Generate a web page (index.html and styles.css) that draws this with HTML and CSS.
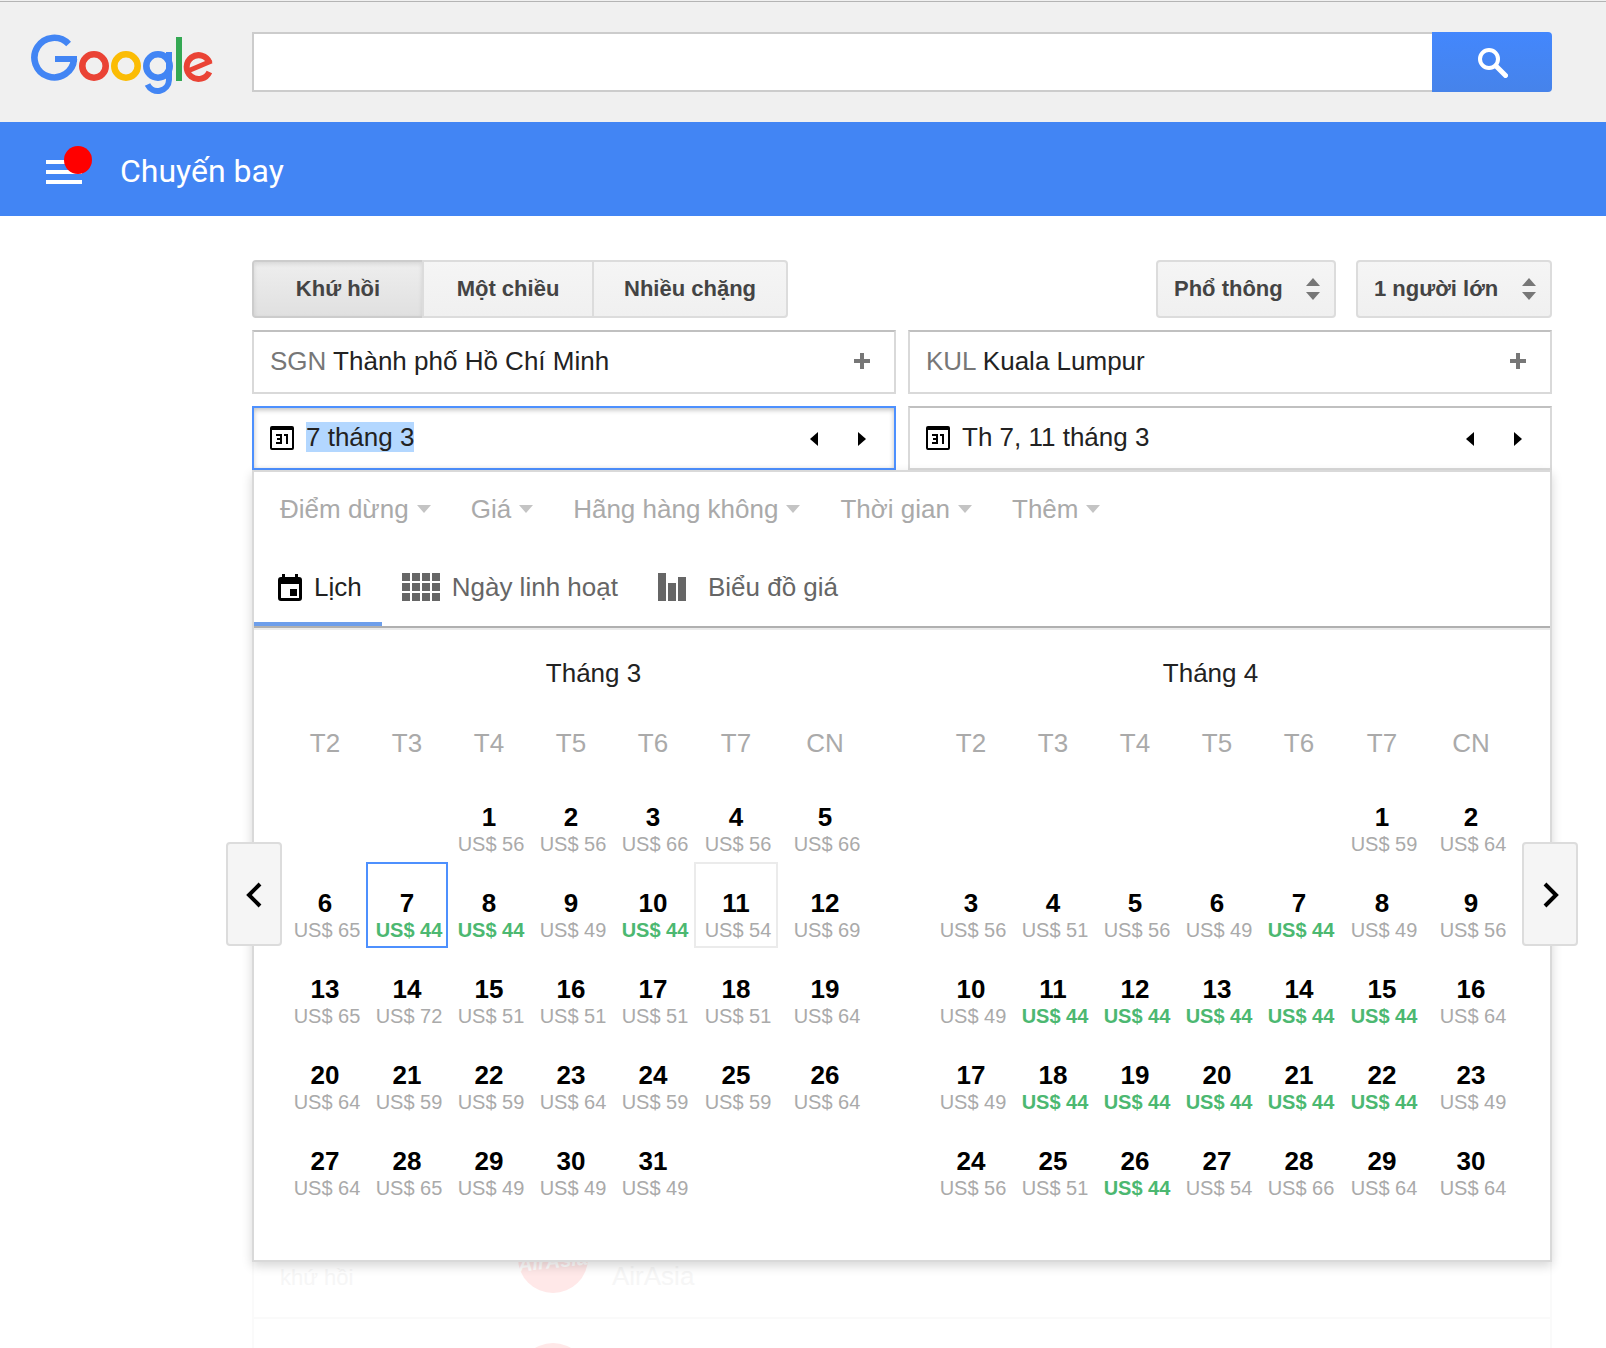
FILE: index.html
```html
<!DOCTYPE html>
<html lang="vi">
<head>
<meta charset="utf-8">
<title>Chuyến bay</title>
<meta name="viewport" content="width=device-width, initial-scale=1">
<link rel="stylesheet" href="styles.css">
</head>
<body>
<header class="search-header">
  <a class="logo" href="#" aria-label="Google">
    <svg width="184" height="62" viewBox="0 0 184 62" fill="none" stroke-width="6.6">
      <g stroke="#4285f4">
        <path d="M37.6 10A19.8 19.8 0 1 0 43 25"/>
        <path d="M24 25H46" stroke-width="6"/>
        <circle cx="127" cy="32" r="11.7"/>
        <path d="M138 18V46A11.3 11.3 0 0 1 116.5 50.5" stroke-width="6"/>
      </g>
      <circle cx="63" cy="32" r="11.7" stroke="#ea4335"/>
      <circle cx="95" cy="32" r="11.7" stroke="#fbbc05"/>
      <rect x="145" y="3" width="6" height="44" fill="#34a853"/>
      <g stroke="#ea4335" stroke-width="6">
        <path d="M178.6 28.6A11.9 11.9 0 1 0 178.4 38"/>
        <path d="M158 36.5L180.5 27" stroke-width="5"/>
      </g>
    </svg>
  </a>
  <form class="search-form" onsubmit="return false">
    <input class="search-input" type="text" aria-label="Tìm kiếm">
    <button class="search-button" type="submit" aria-label="Tìm kiếm">
      <svg width="30" height="30" viewBox="0 0 30 30" fill="none" stroke="#fff">
        <circle cx="11" cy="11" r="9" stroke-width="4"/>
        <path d="M18 18L27.5 27.5" stroke-width="5" stroke-linecap="round"/>
      </svg>
    </button>
  </form>
</header>

<nav class="app-bar">
  <button class="menu-button" type="button" aria-label="Menu">
    <svg width="36" height="24" viewBox="0 0 36 24" fill="#fff"><path d="M0 0h36v4H0zM0 10h36v4H0zM0 20h36v4H0z"/></svg>
    <span class="menu-badge"></span>
  </button>
  <h1 class="app-title">Chuyến bay</h1>
</nav>

<main class="content">
  <div class="options">
    <div class="segmented">
      <button class="segment segment-active" type="button" aria-pressed="true">Khứ hồi</button>
      <button class="segment" type="button" aria-pressed="false">Một chiều</button>
      <button class="segment" type="button" aria-pressed="false">Nhiều chặng</button>
    </div>
    <div class="selects">
      <div class="select-wrap">
        <select class="select" aria-label="Hạng ghế"><option>Phổ thông</option></select>
        <svg class="select-icon" width="14" height="22" viewBox="0 0 14 22" fill="#777"><path d="M0 8L7 0L14 8zM0 14H14L7 22z"/></svg>
      </div>
      <div class="select-wrap">
        <select class="select" aria-label="Hành khách"><option>1 người lớn</option></select>
        <svg class="select-icon" width="14" height="22" viewBox="0 0 14 22" fill="#777"><path d="M0 8L7 0L14 8zM0 14H14L7 22z"/></svg>
      </div>
    </div>
  </div>

  <div class="fields">
    <button class="field" type="button">
      <span class="field-text"><span class="code">SGN</span> Thành phố Hồ Chí Minh</span>
      <svg width="16" height="16" viewBox="0 0 16 16" fill="#777"><path d="M6 0h4v6h6v4h-6v6H6v-6H0V6h6z"/></svg>
    </button>
    <button class="field" type="button">
      <span class="field-text"><span class="code">KUL</span> Kuala Lumpur</span>
      <svg width="16" height="16" viewBox="0 0 16 16" fill="#777"><path d="M6 0h4v6h6v4h-6v6H6v-6H0V6h6z"/></svg>
    </button>
    <div class="field field-focused">
      <svg class="date-icon" width="24" height="24" viewBox="0 0 24 24" fill="none" stroke="#000" stroke-width="2"><rect x="1" y="1" width="22" height="22" rx="1"/><path d="M1 2.5H23" stroke-width="3"/><path d="M6 9h5v8H6M7 13h4M14 9h3v9"/></svg>
      <input class="date-input" id="depart" type="text" value="7 tháng 3" aria-label="Ngày đi">
      <button class="step" type="button" aria-label="Ngày trước"><svg width="8" height="14" viewBox="0 0 8 14"><path d="M8 0V14L0 7z"/></svg></button>
      <button class="step" type="button" aria-label="Ngày sau"><svg width="8" height="14" viewBox="0 0 8 14"><path d="M0 0V14L8 7z"/></svg></button>
    </div>
    <div class="field">
      <svg class="date-icon" width="24" height="24" viewBox="0 0 24 24" fill="none" stroke="#000" stroke-width="2"><rect x="1" y="1" width="22" height="22" rx="1"/><path d="M1 2.5H23" stroke-width="3"/><path d="M6 9h5v8H6M7 13h4M14 9h3v9"/></svg>
      <input class="date-input" type="text" value="Th 7, 11 tháng 3" aria-label="Ngày về">
      <button class="step" type="button" aria-label="Ngày trước"><svg width="8" height="14" viewBox="0 0 8 14"><path d="M8 0V14L0 7z"/></svg></button>
      <button class="step" type="button" aria-label="Ngày sau"><svg width="8" height="14" viewBox="0 0 8 14"><path d="M0 0V14L8 7z"/></svg></button>
    </div>
  </div>

  <section class="panel">
    <div class="filters">
      <button class="filter" type="button">Điểm dừng</button>
      <button class="filter" type="button">Giá</button>
      <button class="filter" type="button">Hãng hàng không</button>
      <button class="filter" type="button">Thời gian</button>
      <button class="filter" type="button">Thêm</button>
    </div>
    <div class="tabs" role="tablist">
      <button class="tab tab-active" type="button" role="tab" aria-selected="true">
        <svg width="24" height="28" viewBox="0 0 24 28" fill="#000"><path fill-rule="evenodd" d="M4 1h3v3h10V1h3v3h1a3 3 0 0 1 3 3v18a3 3 0 0 1-3 3H3a3 3 0 0 1-3-3V7a3 3 0 0 1 3-3h1zM3 11v14h18V11zM12 16h7v7h-7z"/></svg>
        Lịch
      </button>
      <button class="tab" type="button" role="tab" aria-selected="false">
        <svg width="38" height="28" viewBox="0 0 38 28" fill="#666"><path d="M0 0h8v8H0zM10 0h8v8h-8zM20 0h8v8h-8zM30 0h8v8h-8zM0 10h8v8H0zM10 10h8v8h-8zM20 10h8v8h-8zM30 10h8v8h-8zM0 20h8v8H0zM10 20h8v8h-8zM20 20h8v8h-8zM30 20h8v8h-8z"/></svg>
        Ngày linh hoạt
      </button>
      <button class="tab" type="button" role="tab" aria-selected="false">
        <svg width="38" height="28" viewBox="0 0 38 28" fill="#666"><path d="M0 0h8v28H0zM10 10h8v18h-8zM20 4h8v24h-8z"/></svg>
        Biểu đồ giá
      </button>
    </div>
    <div class="months" id="months"></div>
    <button class="page-button page-prev" type="button" aria-label="Tháng trước"><svg width="16" height="26" viewBox="0 0 16 26" fill="none" stroke="#000" stroke-width="4"><path d="M14 2L3 13L14 24"/></svg></button>
    <button class="page-button page-next" type="button" aria-label="Tháng sau"><svg width="16" height="26" viewBox="0 0 16 26" fill="none" stroke="#000" stroke-width="4"><path d="M2 2L13 13L2 24"/></svg></button>
  </section>

  <section class="results">
    <div class="result">
      <span class="result-trip">khứ hồi</span>
      <svg width="70" height="70" viewBox="0 0 70 70"><circle cx="35" cy="35" r="35" fill="#ffe8e8"/><text class="airline-mark" x="35" y="45" text-anchor="middle" transform="rotate(-6 35 40)">AirAsia</text></svg>
      <span class="result-airline">AirAsia</span>
    </div>
    <div class="result">
      <span class="result-trip"></span>
      <svg width="70" height="70" viewBox="0 0 70 70"><circle cx="35" cy="35" r="35" fill="#ffe8e8"/></svg>
    </div>
  </section>
</main>
<script src="calendar.js"></script>
</body>
</html>
```
FILE: styles.css
```css
* {
  box-sizing: border-box;
}

body {
  margin: 0;
  background: #fff;
  color: #222;
  font-family: "Liberation Sans", Arial, sans-serif;
  font-size: 26px;
  line-height: 30px;
}

button,
input,
select {
  margin: 0;
  padding: 0;
  border: 0;
  border-radius: 0;
  outline: 0;
  background: none;
  color: inherit;
  font: inherit;
}

svg {
  display: block;
  flex: none;
}

.search-header {
  display: flex;
  height: 122px;
  padding: 32px 54px 0 31px;
  background: #f0f0f0;
  box-shadow: inset 0 1px #f0f0f0, inset 0 2px #b4b4b4;
}

.logo {
  flex: none;
  width: 221px;
  padding-top: 2px;
}

.search-form {
  display: flex;
  flex: 1;
  height: 60px;
}

.search-input {
  flex: 1;
  min-width: 0;
  padding: 0 16px;
  border: 2px solid #ccc;
  border-right: 0;
  background: #fff;
}

.search-button {
  display: flex;
  align-items: center;
  justify-content: center;
  width: 120px;
  padding: 2px 0 0 2px;
  border-radius: 0 4px 4px 0;
  background: linear-gradient(#4387fd, #4683ea);
}

.app-bar {
  display: flex;
  align-items: center;
  gap: 38px;
  height: 94px;
  padding: 6px 46px 0;
  background: #4285f4;
  color: #fff;
}

.menu-button {
  position: relative;
}

.menu-badge {
  position: absolute;
  top: -14px;
  right: -10px;
  width: 28px;
  height: 28px;
  border-radius: 50%;
  background: #f00;
}

.app-title {
  margin: 0;
  padding-bottom: 2px;
  font-family: Roboto, sans-serif;
  font-size: 32px;
  font-weight: 400;
  line-height: 40px;
}

.content {
  padding: 44px 54px 0 252px;
}

.options {
  display: flex;
  justify-content: space-between;
  color: #444;
  font-size: 22px;
  font-weight: bold;
}

.segmented {
  display: flex;
}

.segment {
  min-width: 172px;
  height: 58px;
  padding: 0 30px;
  border: 2px solid #dcdcdc;
  background: linear-gradient(#f5f5f5, #f0f0f0);
}

.segment + .segment {
  margin-left: -2px;
}

.segment:first-child {
  border-radius: 4px 0 0 4px;
}

.segment:last-child {
  border-radius: 0 4px 4px 0;
}

.segment-active {
  border-color: #ccc;
  background: linear-gradient(#eee, #e0e0e0);
  box-shadow: inset 0 2px 4px rgba(0, 0, 0, 0.1);
}

.selects {
  display: flex;
  gap: 20px;
}

.select-wrap {
  position: relative;
}

.select {
  height: 58px;
  padding: 0 51px 0 16px;
  border: 2px solid #dcdcdc;
  border-radius: 4px;
  background: linear-gradient(#f5f5f5, #f0f0f0);
  appearance: none;
}

.select-icon {
  position: absolute;
  top: 18px;
  right: 16px;
  pointer-events: none;
}

.fields {
  display: grid;
  grid-template-columns: 1fr 1fr;
  gap: 12px;
  margin-top: 12px;
}

.field {
  display: flex;
  align-items: center;
  height: 64px;
  padding: 0 24px 2px 16px;
  border: 2px solid #d9d9d9;
  border-top-color: #c0c0c0;
  background: #fff;
  text-align: left;
}

.field-focused {
  border-color: #4d90fe;
  box-shadow: inset 0 2px 5px rgba(0, 0, 0, 0.25);
}

.field-text {
  flex: 1;
}

.code {
  color: #777;
}

.date-icon {
  margin: 2px 12px 0 0;
}

.date-input {
  flex: 1;
  min-width: 0;
  height: 30px;
}

.date-input::selection {
  background: #b3d7ff;
  color: #222;
}

.step {
  padding: 12px 20px 8px;
}

.step:last-child {
  margin-right: -16px;
}

.panel {
  position: relative;
  z-index: 1;
  border: 2px solid #d9d9d9;
  background: #fff;
  box-shadow: 0 4px 10px rgba(0, 0, 0, 0.16);
}

.filters {
  display: flex;
  gap: 40px;
  padding: 22px 26px 26px;
  color: #aaa;
}

.filter {
  display: flex;
  align-items: center;
  gap: 8px;
}

.filter::after {
  content: "";
  border: 7px solid transparent;
  border-top: 8px solid #c4c4c4;
  border-bottom: 0;
}

.tabs {
  display: flex;
  border-bottom: 2px solid #b0b0b0;
  box-shadow: 0 2px #ebebeb;
  color: #666;
}

.tab {
  display: flex;
  align-items: center;
  gap: 12px;
  padding: 22px 20px 20px;
  border-bottom: 4px solid transparent;
}

.tab-active {
  padding-left: 24px;
  border-color: #6d9eeb;
  color: #222;
}

.months {
  display: grid;
  grid-template-columns: 1fr 1fr;
  padding: 30px 32px 54px 30px;
}

.month-name {
  margin: 0 0 40px;
  padding-left: 2px;
  font-size: 26px;
  font-weight: 400;
  text-align: center;
}

.calendar {
  width: 100%;
  max-width: 588px;
  border-collapse: collapse;
  table-layout: fixed;
}

.month:last-child .calendar {
  margin-left: auto;
}

.calendar th {
  width: 82px;
  padding: 0 0 18px;
  color: #aaa;
  font-weight: 400;
}

.calendar th:nth-child(6) {
  width: 84px;
}

.calendar th:nth-child(7) {
  width: 94px;
}

.calendar td {
  height: 86px;
  padding: 0;
}

.day {
  display: block;
  width: 100%;
  height: 86px;
  padding-top: 22px;
  border: 2px solid transparent;
  color: #000;
  font-weight: bold;
  line-height: 28px;
}

.day-depart {
  border-color: #4d90fe;
}

.day-return {
  border-color: #ebebeb;
}

.price {
  display: block;
  padding-left: 4px;
  color: #aaa;
  font-size: 20px;
  font-weight: 400;
  line-height: 26px;
  white-space: nowrap;
}

.price-low {
  color: #4cb871;
  font-weight: bold;
}

.page-button {
  position: absolute;
  top: 370px;
  display: flex;
  align-items: center;
  justify-content: center;
  width: 56px;
  height: 104px;
  padding-top: 2px;
  border: 2px solid #dcdcdc;
  border-radius: 4px;
  background: #f5f5f5;
}

.page-prev {
  left: -28px;
}

.page-next {
  right: -28px;
  padding-left: 2px;
}

.results {
  height: 149px;
  margin-top: -63px;
  border: solid #fafafa;
  border-width: 0 2px;
  overflow: hidden;
}

.result {
  display: flex;
  align-items: center;
  height: 120px;
  padding-left: 26px;
  border-bottom: 2px solid #fafafa;
  color: #f6f6f6;
}

.result-trip {
  width: 238px;
  padding-top: 40px;
  font-size: 22px;
}

.result-airline {
  padding: 36px 0 0 24px;
}

.airline-mark {
  fill: #fff;
  font-size: 20px;
  font-style: italic;
  font-weight: bold;
}
```
FILE: calendar.js
```javascript
const WEEKDAYS = ["T2", "T3", "T4", "T5", "T6", "T7", "CN"];
const LOWEST = 44;

// offset: number of empty cells before day 1; prices: one fare per day
const MONTHS = [
  {
    name: "Tháng 3", offset: 2, depart: 7, back: 11,
    prices: [56, 56, 66, 56, 66,
      65, 44, 44, 49, 44, 54, 69,
      65, 72, 51, 51, 51, 51, 64,
      64, 59, 59, 64, 59, 59, 64,
      64, 65, 49, 49, 49]
  },
  {
    name: "Tháng 4", offset: 5,
    prices: [59, 64,
      56, 51, 56, 49, 44, 49, 56,
      49, 44, 44, 44, 44, 44, 64,
      49, 44, 44, 44, 44, 44, 49,
      56, 51, 44, 54, 66, 64, 64]
  }
];

function dayCell(month, day) {
  if (day < 1 || day > month.prices.length) return "<td></td>";
  const price = month.prices[day - 1];
  let cls = "day";
  if (day === month.depart) cls += " day-depart";
  if (day === month.back) cls += " day-return";
  const priceCls = price === LOWEST ? "price price-low" : "price";
  return `<td><button class="${cls}" type="button">${day}<span class="${priceCls}">US$ ${price}</span></button></td>`;
}

function monthMarkup(month) {
  let rows = "";
  for (let start = 1 - month.offset; start <= month.prices.length; start += 7) {
    rows += "<tr>" + WEEKDAYS.map((_, i) => dayCell(month, start + i)).join("") + "</tr>";
  }
  const head = WEEKDAYS.map(d => `<th scope="col">${d}</th>`).join("");
  return `<div class="month"><h2 class="month-name">${month.name}</h2>
    <table class="calendar"><thead><tr>${head}</tr></thead><tbody>${rows}</tbody></table></div>`;
}

document.getElementById("months").innerHTML = MONTHS.map(monthMarkup).join("");

const depart = document.getElementById("depart");
depart.focus();
depart.select();
```
